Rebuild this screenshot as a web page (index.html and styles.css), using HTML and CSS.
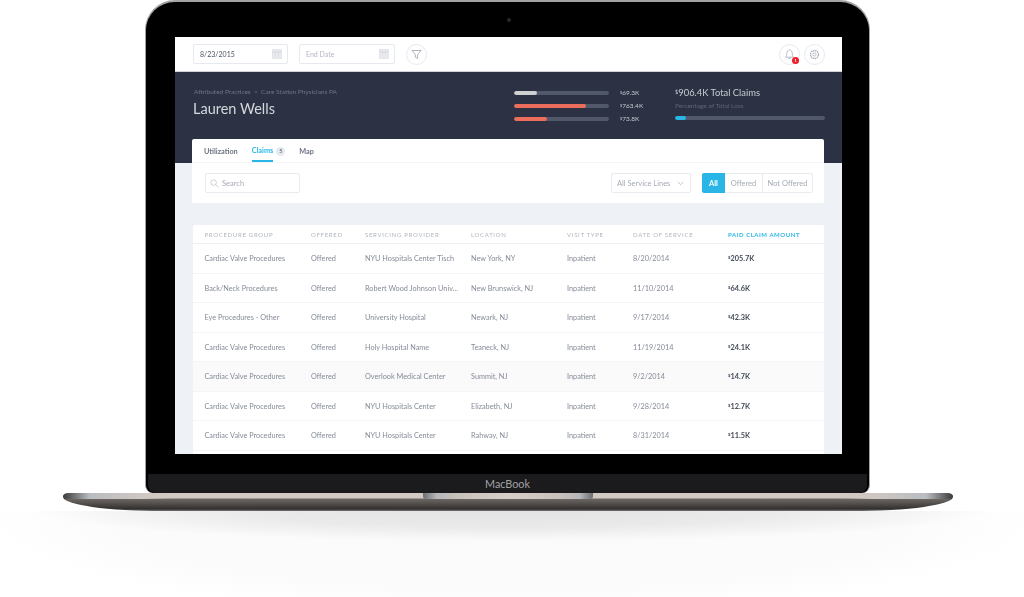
FILE: index.html
```html
<!DOCTYPE html>
<html lang="en">

<head>
  <meta charset="utf-8">
  <meta name="viewport" content="width=device-width, initial-scale=1">
  <title>Claims</title>
  <link rel="stylesheet" href="styles.css">
</head>

<body>
  <div class="lid">
    <div class="bezel-top"><span class="camera"></span></div>

    <div class="screen">
      <!-- Top bar -->
      <header class="topbar">
        <div class="date-input">
          <span>8/23/2015</span>
          <svg class="cal-icon" viewBox="0 0 10 10"><rect x="0.5" y="0.5" width="9" height="9" fill="#e9ebef" stroke="#dfe2e7" stroke-width="0.8"/><path d="M1 3h8M3 5h1M6 5h1M3 7h1M6 7h1" stroke="#c6cad1" stroke-width="0.8"/></svg>
        </div>
        <div class="date-input placeholder">
          <span>End Date</span>
          <svg class="cal-icon" viewBox="0 0 10 10"><rect x="0.5" y="0.5" width="9" height="9" fill="#e9ebef" stroke="#dfe2e7" stroke-width="0.8"/><path d="M1 3h8M3 5h1M6 5h1M3 7h1M6 7h1" stroke="#c6cad1" stroke-width="0.8"/></svg>
        </div>
        <button class="round-btn filter-btn">
          <svg width="11" height="11" viewBox="0 0 11 11"><path d="M1 1.500h9L6.600 5.800v3.600L4.400 8.200V5.800z" fill="none" stroke="#9aa1ad" stroke-width="0.8"/></svg>
        </button>
        <button class="round-btn bell-btn">
          <svg width="11" height="12" viewBox="0 0 11 12"><path d="M1.500 9.200c1-1 1.200-2 1.200-3.700C2.700 3.600 3.900 2 5.500 2s2.800 1.600 2.800 3.500c0 1.700.2 2.700 1.200 3.700zM4.500 10.500h2" fill="none" stroke="#a4aab5" stroke-width="0.8"/></svg>
          <span class="notif-dot">1</span>
        </button>
        <button class="round-btn gear-btn">
          <svg width="11" height="11" viewBox="0 0 11 11"><circle cx="5.500" cy="5.500" r="4" fill="none" stroke="#a9afb9" stroke-width="1.300" stroke-dasharray="1.500 0.600"/><circle cx="5.500" cy="5.500" r="1.600" fill="none" stroke="#a9afb9" stroke-width="0.800"/></svg>
        </button>
      </header>

      <!-- Summary band -->
      <section class="band">
        <div class="band-title">
          <div class="crumbs">Attributed Practices &nbsp;&gt;&nbsp; Care Station Physicians PA</div>
          <h1>Lauren Wells</h1>
        </div>
        <div class="band-bars">
          <div class="bar-row">
            <div class="track"><div class="fill fill-grey" style="width: 24%"></div></div>
            <span class="bar-value"><sup>$</sup>69.3K</span>
          </div>
          <div class="bar-row">
            <div class="track"><div class="fill fill-red" style="width: 76%"></div></div>
            <span class="bar-value"><sup>$</sup>763.4K</span>
          </div>
          <div class="bar-row">
            <div class="track"><div class="fill fill-red" style="width: 35%"></div></div>
            <span class="bar-value"><sup>$</sup>73.8K</span>
          </div>
        </div>
        <div class="band-total">
          <div class="total-title"><sup>$</sup>906.4K Total Claims</div>
          <div class="total-sub">Percentage of Total Loss</div>
          <div class="track"><div class="fill fill-blue" style="width: 7%"></div></div>
        </div>
      </section>

      <div class="content">
        <!-- Tabs and filters -->
        <section class="card">
          <nav class="tabs">
            <a class="tab">Utilization</a>
            <a class="tab active">Claims</a>
            <span class="tab-badge">5</span>
            <a class="tab tab-map">Map</a>
          </nav>
          <div class="filters">
            <div class="search">
              <svg width="9" height="9" viewBox="0 0 9 9"><circle cx="3.600" cy="3.600" r="2.800" fill="none" stroke="#b8bdc6" stroke-width="0.700"/><path d="M5.700 5.700L8.500 8.500" stroke="#b8bdc6" stroke-width="0.700"/></svg>
              <span>Search</span>
            </div>
            <div class="select">
              <span>All Service Lines</span>
              <svg width="7" height="5" viewBox="0 0 7 5"><path d="M0.800 1l2.700 2.700L6.200 1" fill="none" stroke="#a9afb9" stroke-width="0.800"/></svg>
            </div>
            <div class="segment">
              <span class="seg seg-all">All</span>
              <span class="seg seg-offered">Offered</span>
              <span class="seg seg-not">Not Offered</span>
            </div>
          </div>
        </section>

        <!-- Claims table -->
        <section class="claims">
          <div class="row head">
            <span>Procedure Group</span><span>Offered</span><span>Servicing Provider</span><span>Location</span><span>Visit Type</span><span>Date of Service</span><span class="sorted">Paid Claim Amount</span>
          </div>
          <div class="row">
            <span>Cardiac Valve Procedures</span><span>Offered</span><span>NYU Hospitals Center Tisch</span><span>New York, NY</span><span>Inpatient</span><span>8/20/2014</span><span class="amount"><sup>$</sup>205.7K</span>
          </div>
          <div class="row">
            <span>Back/Neck Procedures</span><span>Offered</span><span>Robert Wood Johnson Univ...</span><span>New Brunswick, NJ</span><span>Inpatient</span><span>11/10/2014</span><span class="amount"><sup>$</sup>64.6K</span>
          </div>
          <div class="row">
            <span>Eye Procedures - Other</span><span>Offered</span><span>University Hospital</span><span>Newark, NJ</span><span>Inpatient</span><span>9/17/2014</span><span class="amount"><sup>$</sup>42.3K</span>
          </div>
          <div class="row">
            <span>Cardiac Valve Procedures</span><span>Offered</span><span>Holy Hospital Name</span><span>Teaneck, NJ</span><span>Inpatient</span><span>11/19/2014</span><span class="amount"><sup>$</sup>24.1K</span>
          </div>
          <div class="row hovered">
            <span>Cardiac Valve Procedures</span><span>Offered</span><span>Overlook Medical Center</span><span>Summit, NJ</span><span>Inpatient</span><span>9/2/2014</span><span class="amount"><sup>$</sup>14.7K</span>
          </div>
          <div class="row">
            <span>Cardiac Valve Procedures</span><span>Offered</span><span>NYU Hospitals Center</span><span>Elizabeth, NJ</span><span>Inpatient</span><span>9/28/2014</span><span class="amount"><sup>$</sup>12.7K</span>
          </div>
          <div class="row">
            <span>Cardiac Valve Procedures</span><span>Offered</span><span>NYU Hospitals Center</span><span>Rahway, NJ</span><span>Inpatient</span><span>8/31/2014</span><span class="amount"><sup>$</sup>11.5K</span>
          </div>
        </section>
      </div>
    </div>

    <div class="bezel-bottom"></div>
    <div class="chin">MacBook</div>
  </div>

  <div class="base">
    <div class="notch"></div>
  </div>
  <div class="floor"></div>
</body>

</html>
```

FILE: styles.css
```css
html,
body {
  margin: 0;
  height: 597px;
  overflow: hidden;
  background-color: #fff;
  font-family: "Lato", "Liberation Sans", sans-serif;
}

sup {
  font-size: 60%;
  line-height: 0;
  vertical-align: 0.35em;
}

/* Laptop */
.lid {
  box-sizing: border-box;
  width: 725px;
  height: 493px;
  margin: 0 0 0 145px;
  padding: 0 27px 0 29px;
  background-color: #000;
  border: 1px solid #a3a3a3;
  border-top-width: 2px;
  border-bottom: 0;
  border-radius: 30px 30px 8px 8px;
}

.bezel-top {
  height: 35px;
  display: flex;
  align-items: center;
  justify-content: center;
}

.camera {
  width: 4px;
  height: 4px;
  border-radius: 50%;
  background-color: #26282c;
}

.screen {
  width: 667px;
  height: 417px;
  overflow: hidden;
  background-color: #eef1f6;
  filter: blur(0.5px);
}

.bezel-bottom {
  height: 20px;
}

.chin {
  height: 19px;
  margin: 0 -25px 0 -27px;
  background-color: #1b1b1d;
  border-radius: 0 0 8px 8px;
  color: #a3a3a5;
  font-size: 10.8px;
  line-height: 19px;
  text-align: center;
}

.base {
  width: 890px;
  height: 18px;
  margin-left: 63px;
  display: flex;
  justify-content: center;
  border-radius: 5px 5px 100px 100px / 3px 3px 14px 14px;
  background:
    linear-gradient(90deg, #3c3b3c 0, #b9bcc0 3%, #cfc7c2 9%, rgba(207, 199, 194, 0) 12%, rgba(207, 199, 194, 0) 88%, #cfc7c2 91%, #b9bcc0 97%, #3c3b3c 100%) top / 100% 6px no-repeat,
    linear-gradient(#d2cac5 0, #d2cac5 5px, #6c6663 6px, #56524f 10px, #322f2e 16px, #77757a 18px);
}

.notch {
  width: 170px;
  height: 6px;
  background: linear-gradient(90deg, #6d6e72 0, #b6b7ba 8%, #c9c1bc 20%, #d6cec9 50%, #c9c1bc 80%, #b6b7ba 92%, #6d6e72 100%);
  border-radius: 0 0 3px 3px;
}

.floor {
  height: 86px;
  background:
    radial-gradient(ellipse 47% 30px at 50% 0, #e3e3e3 0, #eaeaea 55%, rgba(245, 245, 245, 0) 100%),
    radial-gradient(ellipse 52% 110% at 50% 10%, #fafafa 0, #fbfbfb 70%, #fff 100%);
}

/* Top bar */
.topbar {
  box-sizing: border-box;
  height: 34px;
  padding-left: 18px;
  padding-right: 17px;
  display: flex;
  align-items: center;
  background-color: #fff;
}

.date-input {
  box-sizing: border-box;
  width: 95px;
  height: 20px;
  margin-right: 11px;
  padding: 0 5px 0 6px;
  display: flex;
  align-items: center;
  justify-content: space-between;
  border: 1px solid #e6e9ef;
  border-radius: 2px;
  color: #4d5563;
  font-size: 7px;
}

.placeholder {
  width: 96px;
  color: #b2b7c0;
}

.cal-icon {
  width: 10px;
  height: 10px;
}

.round-btn {
  box-sizing: border-box;
  width: 21px;
  height: 21px;
  padding: 0;
  display: flex;
  align-items: center;
  justify-content: center;
  position: relative;
  background-color: #fff;
  border: 1px solid #e6e9ef;
  border-radius: 50%;
}

.bell-btn {
  margin-left: auto;
  margin-right: 4px;
}

.notif-dot {
  width: 7px;
  height: 7px;
  position: absolute;
  right: 0;
  bottom: 0;
  border-radius: 50%;
  background-color: #ee1c25;
  color: #fff;
  font-size: 4px;
  font-weight: 700;
  line-height: 7px;
  text-align: center;
}

/* Summary band */
.band {
  box-sizing: border-box;
  height: 92px;
  padding: 14px 17px 0 18px;
  display: flex;
  align-items: flex-start;
  background-color: #2c3244;
  border-top: 1px solid #cfd2d8;
}

.band-title {
  width: 321px;
}

.crumbs {
  height: 12px;
  padding-left: 1px;
  color: #6e7585;
  font-size: 6.5px;
  line-height: 12px;
}

h1 {
  margin: 1px 0 0;
  color: #d5d8dd;
  font-size: 14.5px;
  font-weight: 400;
  line-height: 20px;
}

.band-bars {
  width: 161px;
}

.bar-row {
  height: 13px;
  display: flex;
  align-items: center;
}

.bar-row .track {
  width: 95px;
  margin-right: 11px;
}

.bar-value {
  color: #c4c7ce;
  font-size: 6.5px;
}

.track {
  height: 4px;
  border-radius: 2px;
  background-color: #505869;
  overflow: hidden;
}

.fill {
  height: 100%;
  border-radius: 2px;
}

.fill-grey {
  background-color: #cfd0d2;
}

.fill-red {
  background-color: #ec6d5b;
}

.fill-blue {
  background-color: #29b6e6;
}

.band-total {
  width: 150px;
}

.total-title {
  height: 13px;
  color: #c9ccd2;
  font-size: 9.4px;
  line-height: 13px;
}

.total-sub {
  height: 13px;
  color: #5d6474;
  font-size: 6.5px;
  line-height: 13px;
}

.band-total .track {
  margin-top: 4px;
}

/* Tabs and filters */
.content {
  margin-top: -24px;
  padding: 0 18px 0 17px;
  position: relative;
}

.card {
  height: 64px;
  background-color: #fff;
  border-radius: 2px 2px 0 0;
}

.tabs {
  box-sizing: border-box;
  height: 24px;
  padding-top: 1px;
  padding-left: 12px;
  display: flex;
  align-items: center;
  border-bottom: 1px solid #f2f4f7;
  color: #6b7280;
  font-size: 7.3px;
  font-weight: 700;
}

.tab {
  margin-right: 14px;
}

.tab.active {
  height: 23px;
  margin-top: -1px;
  margin-right: 3px;
  color: #29b6e6;
  line-height: 24px;
  box-shadow: inset 0 -2px 0 #29b6e6;
}

.tab-badge {
  width: 9px;
  height: 9px;
  margin-right: 14px;
  border-radius: 50%;
  background-color: #e6e9ee;
  color: #777e8b;
  font-size: 5.5px;
  line-height: 9px;
  text-align: center;
}

.filters {
  height: 40px;
  padding: 0 11px 0 13px;
  display: flex;
  align-items: center;
  color: #a5abb5;
  font-size: 7.5px;
}

.search,
.select,
.segment {
  box-sizing: border-box;
  height: 20px;
  display: flex;
  align-items: center;
  border: 1px solid #e8ebf0;
  border-radius: 2px;
}

.search {
  width: 95px;
  padding-left: 4px;
  gap: 3px;
}

.select {
  width: 80px;
  margin-left: auto;
  padding: 0 6px 0 5px;
  justify-content: space-between;
}

.segment {
  width: 111px;
  margin-left: 11px;
}

.seg {
  height: 100%;
  display: flex;
  align-items: center;
  justify-content: center;
}

.seg-all {
  width: 23px;
  margin: -1px 0 -1px -1px;
  height: 20px;
  background-color: #29b6e6;
  border-radius: 2px 0 0 2px;
  color: #fff;
  font-weight: 700;
}

.seg-offered {
  width: 37px;
  border-right: 1px solid #e8ebf0;
}

.seg-not {
  flex: 1;
}

/* Claims table */
.claims {
  height: 229px;
  margin-top: 22px;
  margin-left: 1px;
  background-color: #fff;
  border-radius: 2px 2px 0 0;
}

.row {
  box-sizing: border-box;
  height: 29.5px;
  padding-top: 1px;
  padding-left: 11.5px;
  display: grid;
  grid-template-columns: 106.5px 54px 106px 96px 66px 95px 1fr;
  align-items: center;
  border-bottom: 1px solid #f3f4f7;
  color: #858b97;
  font-size: 7.3px;
  white-space: nowrap;
}

.row.head {
  height: 19px;
  padding-top: 0;
  border-bottom: 1px solid #eef0f4;
  color: #b0b5be;
  font-size: 6px;
  letter-spacing: 0.7px;
  text-transform: uppercase;
}

.row.hovered {
  background-color: #fafafb;
}

.sorted {
  color: #29b6e6;
  font-weight: 700;
  letter-spacing: 0.55px;
}

.amount {
  color: #434a58;
  font-weight: 700;
}
```
